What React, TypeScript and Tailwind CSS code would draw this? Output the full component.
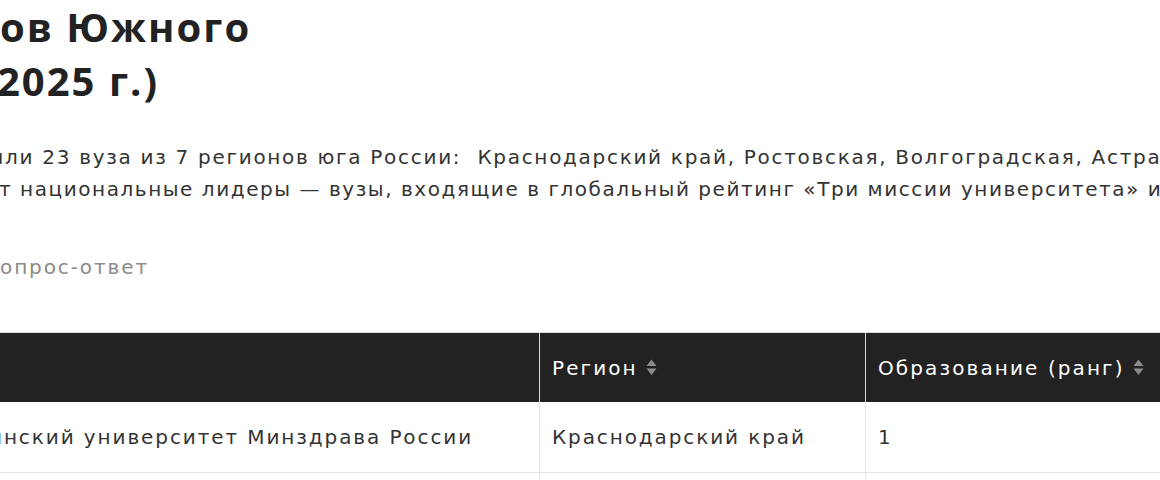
import React from 'react'

// hidden start of a line that has been scrolled out of view to the left
function Clip({ children }: { children: React.ReactNode }) {
  return (
    <span className="inline-flex w-0 justify-end whitespace-nowrap">
      <span className="shrink-0">{children}</span>
    </span>
  )
}

function SortIcon() {
  return (
    <svg width="11" height="17" viewBox="0 0 11 17" className="ml-2 shrink-0" fill="#8c8c8c">
      <path d="M5.5 0.5 L10.5 7 L0.5 7 Z" />
      <path d="M0.5 9.5 L10.5 9.5 L5.5 16 Z" />
    </svg>
  )
}

const rows = [
  { pre: 'Кубанский государственный медиц', name: 'инский университет Минздрава России', region: 'Краснодарский край', rank: '1' },
  { pre: 'Южный федеральный университе', name: 'т', region: 'Ростовская область', rank: '2' },
]

export default function App() {
  return (
    <div className="w-[1160px] h-[480px] overflow-hidden bg-white font-['DejaVu_Sans',sans-serif] text-[#333]">
      <h1 className="font-['Open_Sans',sans-serif] text-[40px] font-bold leading-[54px] tracking-[2px] text-[#222] whitespace-nowrap">
        <div className="pl-[0px]"><Clip>Рейтинг университет</Clip>ов Южного</div>
        <div className="-ml-[3px]"><Clip>федерального округа (</Clip>2025 г.)</div>
      </h1>

      <div className="mt-[33px] text-[20px] leading-[32px] whitespace-nowrap">
        <div className="pl-[5px] tracking-[1.7px]">
          <Clip>В рейтинг вош</Clip>ли 23 вуза из 7 регионов юга России:{'\u00a0 '}Краснодарский край, Ростовская, Волгоградская, Астраханская области
        </div>
        <div className="-ml-[1px] tracking-[1.55px]">
          <Clip>Верхние строчки занимаю</Clip>т национальные лидеры — вузы, входящие в глобальный рейтинг «Три миссии университета» и Московский рейтинг
        </div>
      </div>

      <div className="mt-[46px] text-[20px] leading-[32px] tracking-[1.9px] text-[#8a8a8a] whitespace-nowrap">
        <Clip>Формат: в</Clip>опрос-ответ
      </div>

      <div className="mt-[49px] w-[1300px] border-t border-[#d9d9d9] text-[20px] tracking-[1.9px]">
        <div className="grid grid-cols-[540px_326px_434px] bg-[#222] text-white h-[69px] tracking-[2.1px]">
          <div className="border-r border-[#d9d9d9]" />
          <div className="border-r border-[#d9d9d9] flex items-center px-3 whitespace-nowrap">
            Регион<SortIcon />
          </div>
          <div className="flex items-center px-3 whitespace-nowrap">
            Образование (ранг)<SortIcon />
          </div>
        </div>
        {rows.map((r, i) => (
          <div key={i} className="grid grid-cols-[540px_326px_434px] h-[71px] border-b border-[#e5e5e5]">
            <div className="border-r border-[#e5e5e5] flex items-center whitespace-nowrap">
              <span className="-ml-[11px]">
                <Clip>{r.pre}</Clip>{r.name}
              </span>
            </div>
            <div className="border-r border-[#e5e5e5] flex items-center px-3 whitespace-nowrap">{r.region}</div>
            <div className="flex items-center px-3">{r.rank}</div>
          </div>
        ))}
      </div>
    </div>
  )
}
